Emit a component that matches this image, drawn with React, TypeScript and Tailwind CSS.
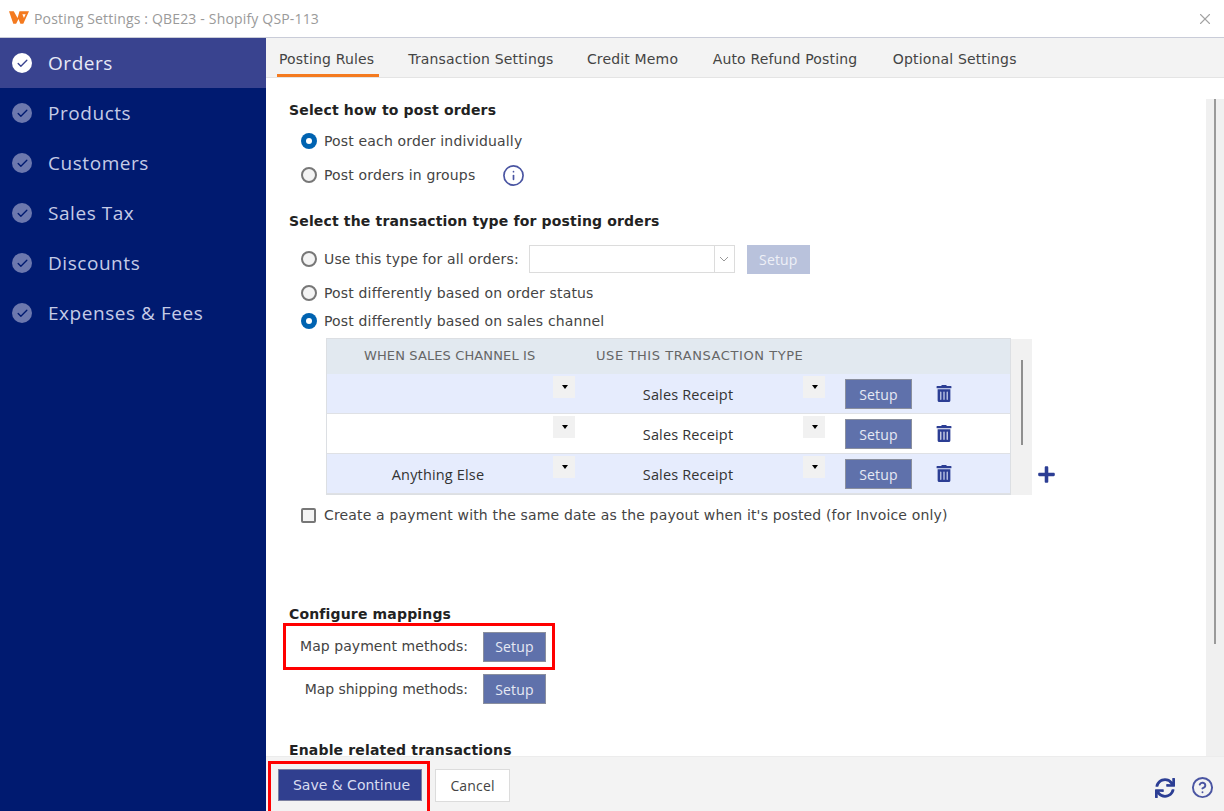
import { Check, CircleHelp, Info, X } from 'lucide-react';
import { FaPlus, FaSync, FaTrashAlt } from 'react-icons/fa';

const navItems = ['Orders', 'Products', 'Customers', 'Sales Tax', 'Discounts', 'Expenses & Fees'];
const tabs = [
  { label: 'Posting Rules', className: 'mr-[27px] border-b-[3px] border-[#f47a1f] pt-[6px]' },
  { label: 'Transaction Settings', className: 'mr-[26.500px] pt-[3px]' },
  { label: 'Credit Memo', className: 'mr-[27.500px] pt-[3px]' },
  { label: 'Auto Refund Posting', className: 'mr-[28.500px] pt-[3px]' },
  { label: 'Optional Settings', className: 'pt-[3px]' },
];

function Radio({ checked }: { checked?: boolean }) {
  if (checked) {
    return (
      <span className="flex h-[16px] w-[16px] shrink-0 items-center justify-center rounded-full bg-[#0063b1]">
        <span className="h-[6px] w-[6px] rounded-full bg-white" />
      </span>
    );
  }
  return <span className="h-[16px] w-[16px] shrink-0 rounded-full border-2 border-[#777] bg-[#f4f4f4]" />;
}

function SetupButton({ className = '' }: { className?: string }) {
  return (
    <button className={`flex h-[30px] w-[63px] items-center justify-center border border-[#8a8f9e] bg-[#5f71ab] font-['Open_Sans',sans-serif] text-[14px] text-[#e6e9f4] ${className}`}>
      Setup
    </button>
  );
}

function Caret() {
  return (
    <span className="flex h-[22px] w-[22px] items-center justify-center bg-[#f1f1f1]">
      <span className="mr-[-2px] h-0 w-0 border-x-[3.5px] border-t-[4px] border-x-transparent border-t-black" />
    </span>
  );
}

function MappingRow({ channel, tinted }: { channel?: string; tinted: boolean }) {
  return (
    <div className={`flex h-[40px] items-start border-b border-[#dfe1e5] ${tinted ? 'bg-[#e6ecfd]' : 'bg-white'}`}>
      <div className="flex h-full w-[226px] shrink-0 items-center justify-center pr-[4px] pt-[2px] font-['Open_Sans',sans-serif] text-[14.5px] text-[#333]">
        {channel}
      </div>
      <div className="mt-[2px] w-[22px] shrink-0">
        <Caret />
      </div>
      <div className="flex h-full w-[228px] shrink-0 items-center justify-center pr-[2px] pt-[2px] font-['Open_Sans',sans-serif] text-[14.5px] text-[#333]">
        Sales Receipt
      </div>
      <div className="mt-[2px] w-[22px] shrink-0">
        <Caret />
      </div>
      <SetupButton className="ml-[20px] mt-[5px] h-[30px] w-[67px]" />
      <FaTrashAlt className="ml-[24px] mt-[11px] h-[17px] w-[16px] text-[#2c3e94]" />
    </div>
  );
}

export default function App() {
  return (
    <div className="flex h-[811px] w-[1224px] flex-col overflow-hidden bg-white font-['DejaVu_Sans',sans-serif] text-[14px] tracking-[0.16px] text-[#444]">
      {/* Title bar */}
      <div className="flex h-[38px] shrink-0 items-center border-b border-[#c9ccd8] pl-[9px] pr-[10px]">
        <svg width="20" height="14" viewBox="0 0 21 14" className="mb-[2px] shrink-0">
          <path fillRule="evenodd" d="M0 0h5l4 7 2-7h10l-6 13h-3l-2-5-2.500 5h-3zM14 3h3.500l-1.800 4z" fill="#f47a1f" />
        </svg>
        <span className="ml-[5px] font-['Open_Sans',sans-serif] text-[14px] tracking-[0.17px] text-[#9a9a9a]">
          Posting Settings : QBE23 - Shopify QSP-113
        </span>
        <X className="ml-auto h-[18px] w-[18px] text-[#a3a3a3]" strokeWidth={1.5} />
      </div>

      <div className="flex min-h-0 flex-1">
        {/* Sidebar */}
        <nav className="w-[266px] shrink-0 bg-[#001a70] font-['Open_Sans',sans-serif] text-[19px] tracking-[0.55px]">
          {navItems.map((item, i) => (
            <div
              key={item}
              className={`flex h-[50px] items-center pl-[12px] ${i === 0 ? 'bg-[#39438f] text-[#e8eaf6]' : 'text-[#c5cbe6]'}`}
            >
              <span className={`flex h-[20px] w-[20px] items-center justify-center rounded-full ${i === 0 ? 'bg-white text-[#39438f]' : 'bg-[#6c78ae] text-[#001a70]'}`}>
                <Check className="h-[13px] w-[13px]" strokeWidth={2.5} />
              </span>
              <span className="ml-[16px]">{item}</span>
            </div>
          ))}
        </nav>

        <div className="flex min-w-0 flex-1 flex-col">
          {/* Tabs */}
          <div className="flex h-[40px] shrink-0 items-stretch border-b border-[#e4e4e4] bg-[#f3f3f3] pl-[11px]">
            {tabs.map((tab) => (
              <div key={tab.label} className={`flex items-center pl-[2px] pr-[5px] ${tab.className}`}>
                {tab.label}
              </div>
            ))}
          </div>

          {/* Scrolling body */}
          <div className="flex min-h-0 flex-1 overflow-hidden">
            <div className="min-w-0 flex-1 overflow-hidden pl-[23px] pt-[22px]">
              <h3 className="flex h-[20px] items-center font-bold text-[#222]">Select how to post orders</h3>
              <label className="mt-[9px] flex h-[24px] items-center gap-[7px] pl-[12px]">
                <Radio checked />
                Post each order individually
              </label>
              <label className="mt-[10px] flex h-[24px] items-center gap-[7px] pl-[12px]">
                <Radio />
                Post orders in groups
                <Info className="ml-[20px] h-[23px] w-[23px] text-[#4a55a2]" strokeWidth={1.75} />
              </label>

              <h3 className="mt-[24px] flex h-[20px] items-center font-bold text-[#222]">Select the transaction type for posting orders</h3>
              <label className="mt-[16px] flex h-[24px] items-center gap-[7px] pl-[12px]">
                <Radio />
                Use this type for all orders:
                <span className="ml-[3px] flex h-[28px] w-[206px] items-center justify-end border border-[#dcdcdc] bg-white">
                  <span className="flex h-full w-[20px] items-center justify-center border-l border-[#dcdcdc]">
                    <svg width="10" height="6" viewBox="0 0 10 6"><path d="M1 1l4 4 4-4" fill="none" stroke="#999" /></svg>
                  </span>
                </span>
                <span className="ml-[5px] flex h-[29px] w-[63px] items-center justify-center bg-[#b9c2dc] font-['Open_Sans',sans-serif] text-[14px] text-[#eef0f7]">Setup</span>
              </label>
              <label className="mt-[10px] flex h-[24px] items-center gap-[7px] pl-[12px]">
                <Radio />
                Post differently based on order status
              </label>
              <label className="mt-[4px] flex h-[24px] items-center gap-[7px] pl-[12px]">
                <Radio checked />
                Post differently based on sales channel
              </label>

              {/* Sales channel mapping table */}
              <div className="mt-[5px] flex items-end pl-[37px]">
                <div className="w-[685px] border border-[#dcdfe3]">
                  <div className="flex h-[35px] items-center bg-[#e2e9f0] pb-[2px] text-[13px] text-[#666]">
                    <span className="ml-[37px] w-[232px] tracking-[0.12px]">WHEN SALES CHANNEL IS</span>
                    <span className="tracking-[0.57px]">USE THIS TRANSACTION TYPE</span>
                  </div>
                  <MappingRow tinted />
                  <MappingRow tinted={false} />
                  <MappingRow tinted channel="Anything Else" />
                </div>
                <div className="flex h-[156px] w-[21px] justify-center bg-[#f1f1f1] pt-[21px]">
                  <span className="h-[85px] w-[2px] bg-[#8f8f8f]" />
                </div>
                <FaPlus className="mb-[11px] ml-[5px] h-[19px] w-[19px] text-[#2c3e94]" />
              </div>

              <label className="mt-[8px] flex h-[24px] items-center gap-[8px] pl-[12px]">
                <span className="h-[15px] w-[15px] shrink-0 rounded-[2px] border-2 border-[#777] bg-[#f4f4f4]" />
                Create a payment with the same date as the payout when it's posted (for Invoice only)
              </label>

              <h3 className="mt-[77px] flex h-[20px] items-center font-bold text-[#222]">Configure mappings</h3>
              <div className="ml-[-6px] mt-[-1px] flex h-[47px] w-[272px] items-center border-[3px] border-[#ff0000] pl-[14px]">
                <span className="w-[168px] whitespace-nowrap text-right tracking-[0.06px]">Map payment methods:</span>
                <SetupButton className="ml-[15px]" />
              </div>
              <div className="mt-[4px] flex h-[30px] w-[266px] items-center">
                <span className="w-[179px] whitespace-nowrap text-right tracking-[-0.03px]">Map shipping methods:</span>
                <SetupButton className="ml-[15px]" />
              </div>
              <h3 className="mt-[36px] flex h-[20px] items-center font-bold text-[#222]">Enable related transactions</h3>
            </div>

            {/* Page scrollbar */}
            <div className="mt-[21px] flex w-[18px] shrink-0 justify-center bg-[#f0f0f0]">
              <span className="h-[545px] w-[2px] bg-[#9a9a9a]" />
            </div>
          </div>

          {/* Footer */}
          <div className="flex h-[55px] shrink-0 items-end border-t border-[#ececec] bg-[#f3f3f3] pl-[2px] pr-[10px]">
            <div className="flex h-[50px] w-[162px] items-start justify-center border-[3px] border-b-0 border-[#ff0000] pl-[1px] pt-[5px]">
              <button className="h-[32px] w-[144px] border border-[#7b80a0] bg-[#303f8f] pl-[4px] text-[14px] tracking-normal text-[#d9dcf0]">
                Save &amp; Continue
              </button>
            </div>
            <button className="mb-[9px] ml-[5px] h-[33px] w-[75px] border border-[#dcdcdc] bg-white font-['Open_Sans',sans-serif] text-[14px] text-[#444]">
              Cancel
            </button>
            <div className="mb-[12px] ml-auto flex items-center gap-[16px] text-[#2c3e94]">
              <FaSync className="h-[20px] w-[20px]" />
              <CircleHelp className="h-[23px] w-[23px] text-[#4a55a2]" strokeWidth={2} />
            </div>
          </div>
        </div>
      </div>
    </div>
  );
}
